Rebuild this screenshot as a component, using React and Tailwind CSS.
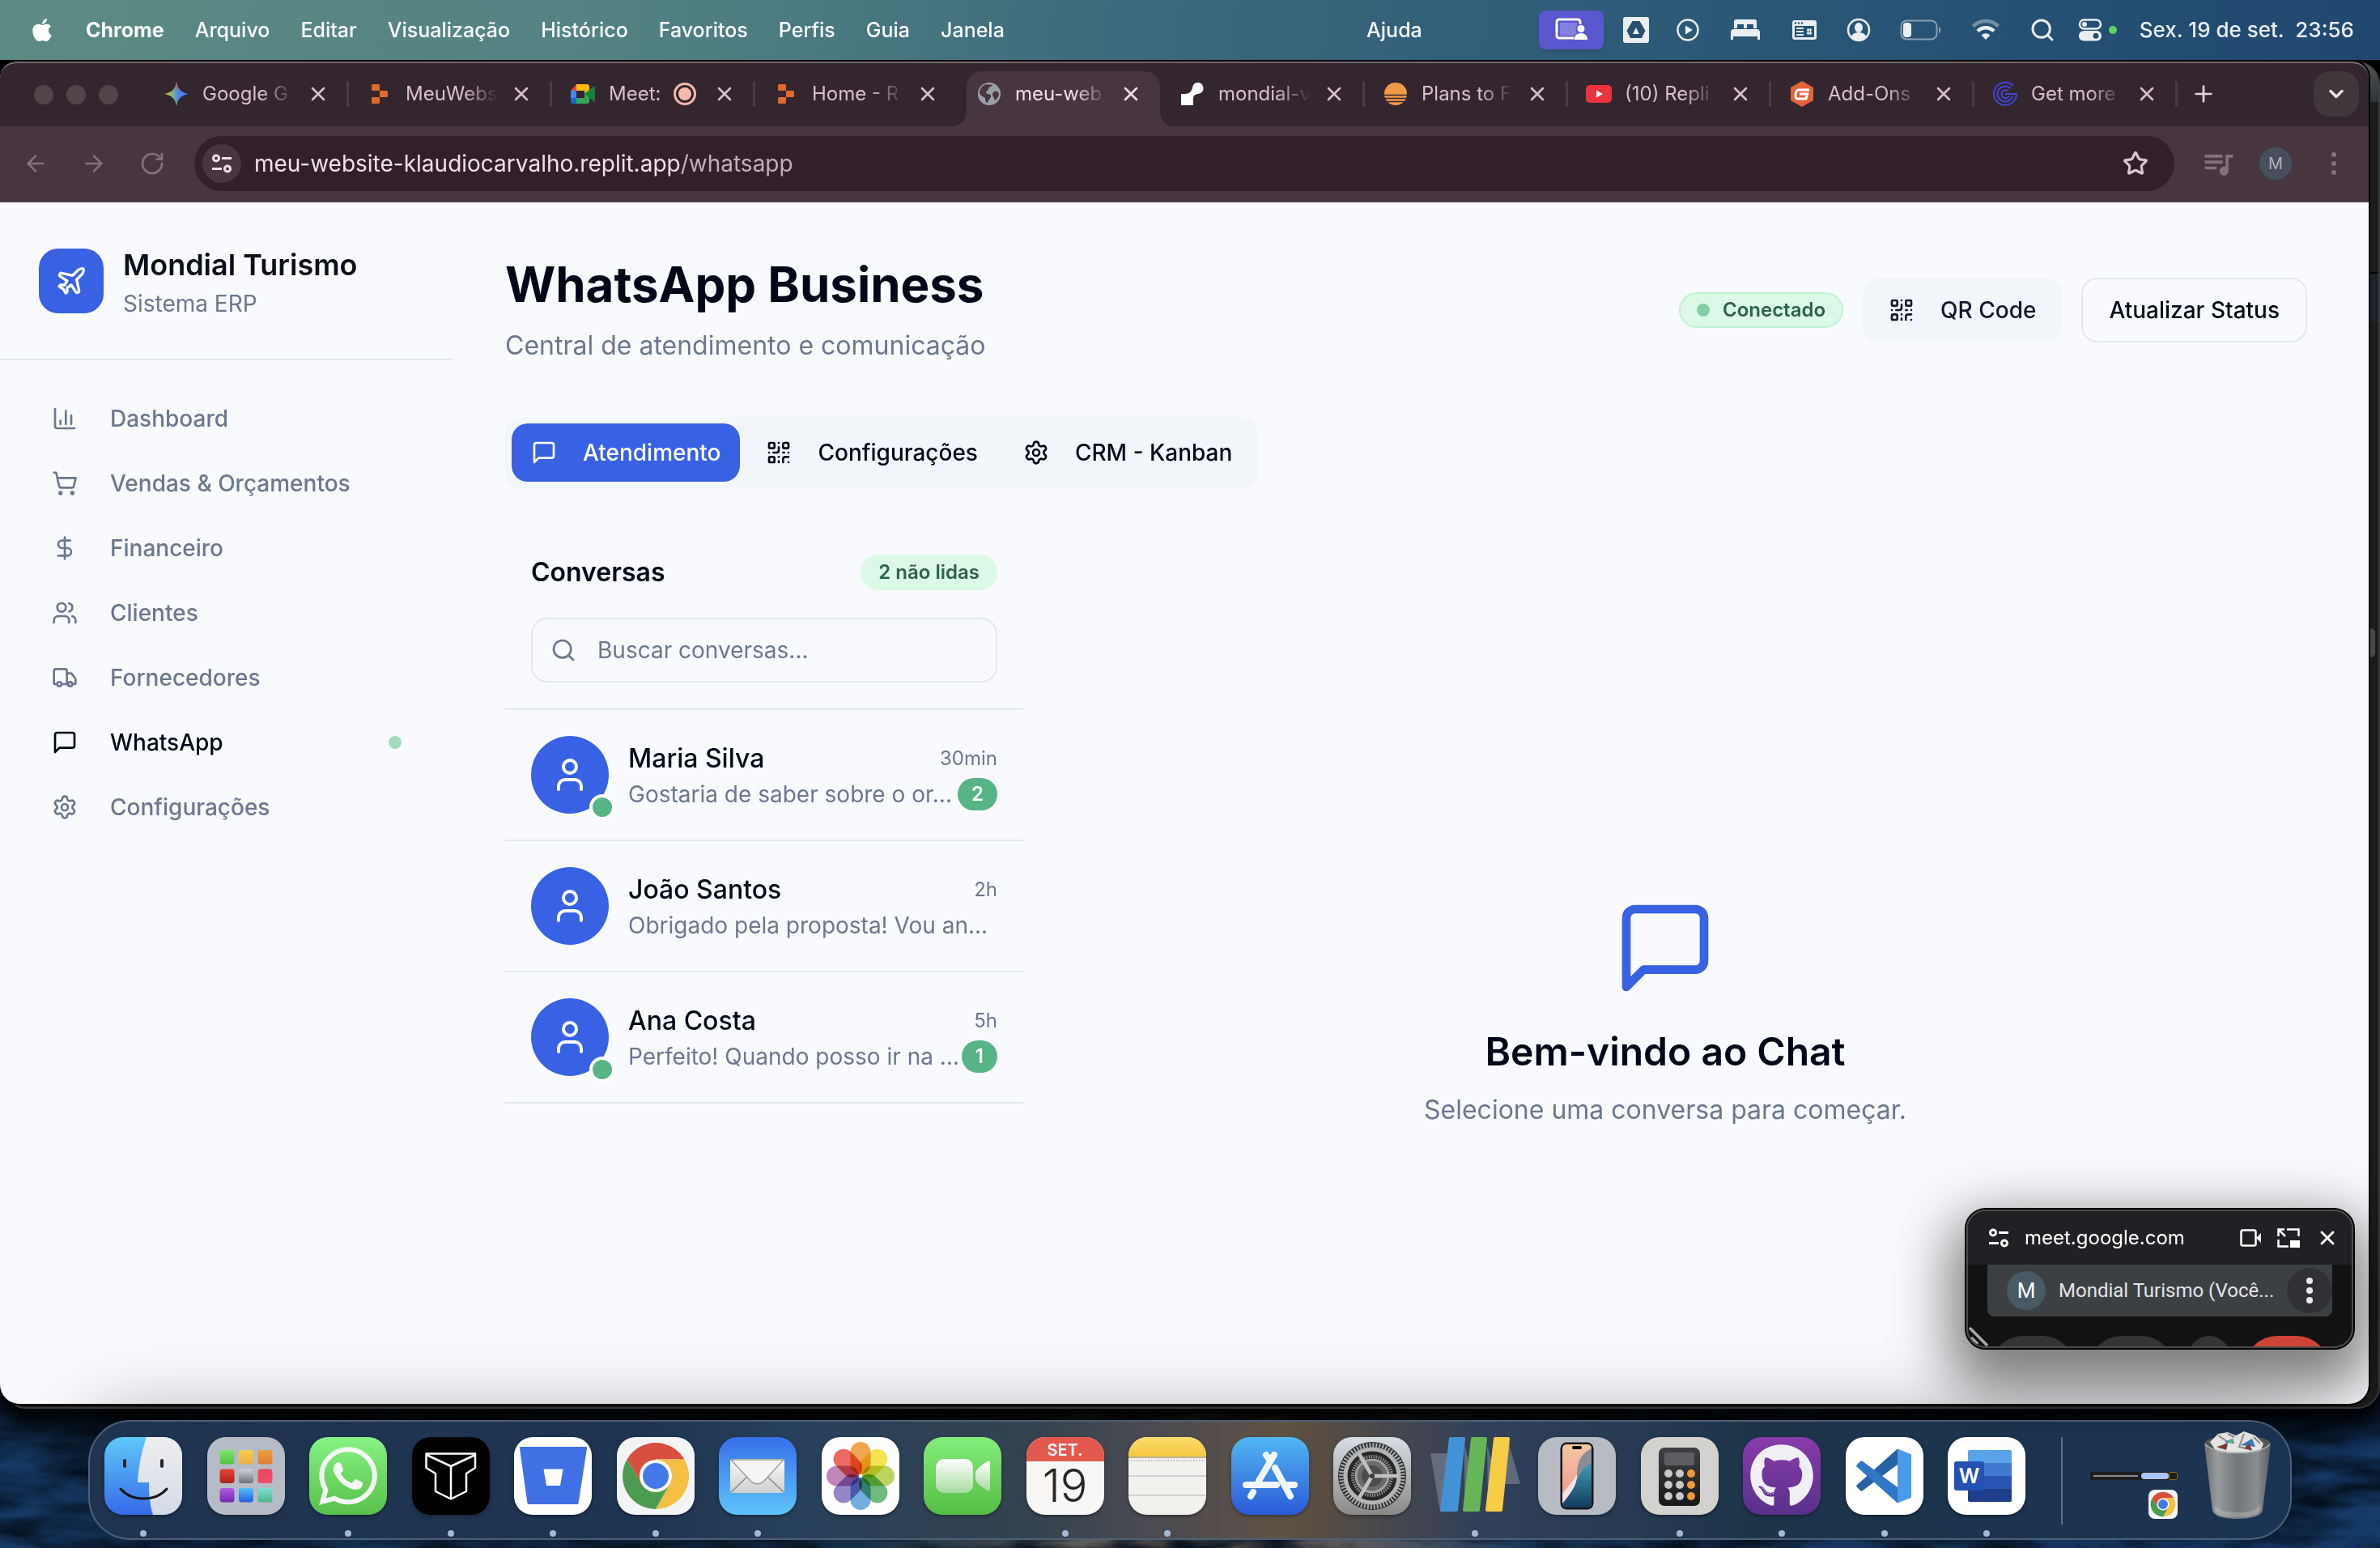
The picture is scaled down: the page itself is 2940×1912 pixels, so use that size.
import React from "react";
import {
  ArrowLeft, ArrowRight, RotateCw, Star, X, Plus, ChevronDown, Plane, ShoppingCart, DollarSign,
  Users, Truck, Settings, QrCode, Search, User,
} from "lucide-react";
import { FaApple, FaGithub, FaWhatsapp } from "react-icons/fa";
import { SiReplit } from "react-icons/si";
import { MdQueueMusic } from "react-icons/md";

/* ---------- wallpaper ---------- */

function Wallpaper() {
  return (
    <svg className="absolute inset-0 h-full w-full" preserveAspectRatio="none" viewBox="0 0 2940 1912" aria-hidden="true">
      <defs>
        <linearGradient id="sea" x1="0" y1="0" x2="1" y2="0">
          <stop offset="0" stopColor="#163a66" />
          <stop offset="0.36" stopColor="#173653" />
          <stop offset="0.48" stopColor="#857a70" />
          <stop offset="0.57" stopColor="#6d6a70" />
          <stop offset="0.64" stopColor="#204470" />
          <stop offset="1" stopColor="#163a69" />
        </linearGradient>
        <filter id="waves" x="0" y="0" width="100%" height="100%" colorInterpolationFilters="sRGB">
          <feTurbulence type="fractalNoise" baseFrequency="0.008 0.03" numOctaves="4" seed="7" />
          <feColorMatrix values="0 0 0 0 0.02  0 0 0 0 0.07  0 0 0 0 0.13  2.6 0 0 0 -0.95" />
        </filter>
      </defs>
      <rect y="1600" width="2940" height="312" fill="url(#sea)" />
      <rect y="1700" width="2940" height="212" filter="url(#waves)" />
    </svg>
  );
}

/* ---------- menu bar ---------- */

const menus = ["Arquivo", "Editar", "Visualização", "Histórico", "Favoritos", "Perfis", "Guia", "Janela"];

function MenuBar() {
  return (
    <header className="relative z-10 flex h-[74px] shrink-0 items-center bg-[linear-gradient(97deg,#5d8a83_0%,#548283_25%,#46757f_38%,#3a677b_50%,#2e5b78_68%,#255073_85%,#21476f_100%)] pr-8 pl-9 text-[25px] leading-8 font-medium text-white [text-shadow:0_2px_6px_rgba(0,0,0,0.25)]">
      <div className="flex items-center gap-[38px]">
        <button type="button" aria-label="Apple"><FaApple className="size-8" /></button>
        <button type="button" className="font-bold">Chrome</button>
        {menus.map((m) => <button type="button" key={m}>{m}</button>)}
      </div>
      <button type="button" className="mr-[144px] ml-auto">Ajuda</button>
      <div className="flex items-center text-[#e9eef0]">
        <span className="flex h-12 w-20 items-center justify-center rounded-lg bg-[#5a57cf] shadow-md">
          <svg viewBox="0 0 40 30" className="h-[30px] w-10 text-white">
            <path d="M31 8V5a3 3 0 0 0-3-3H5a3 3 0 0 0-3 3v17a3 3 0 0 0 3 3h18" fill="none" stroke="currentColor" strokeWidth="3" />
            <path d="M6 6h21v4a7 7 0 0 0 0 9l-4 3H6z" fill="currentColor" opacity="0.25" />
            <circle cx="32" cy="13.500" r="4.500" fill="currentColor" />
            <path d="M23.500 27c0-5 3.500-8 8.500-8s8 3 8 8z" fill="currentColor" />
          </svg>
        </span>
        <svg viewBox="0 0 32 32" className="ml-6 size-8">
          <rect width="32" height="32" rx="3" fill="currentColor" />
          <path d="M11.500 5h9l7 12-4.500 9H9L4.500 17z" fill="#275070" />
          <path d="M16 13l4 8h-8z" fill="currentColor" />
        </svg>
        <svg viewBox="0 0 32 32" className="ml-8 size-8">
          <circle cx="16" cy="16" r="12.500" fill="none" stroke="currentColor" strokeWidth="2.500" />
          <path d="M13 10.500l9 5.500-9 5.500z" fill="currentColor" />
        </svg>
        <svg viewBox="0 0 36 28" className="ml-[37px] h-7 w-9">
          <path d="M4 3.500A2.500 2.500 0 0 1 6.500 1h23A2.500 2.500 0 0 1 32 3.500V12H4z" fill="currentColor" />
          <path d="M8 7h8v5H8zM20 7h8v5h-8z" fill="#295474" />
          <path d="M0 17a4 4 0 0 1 4-4h28a4 4 0 0 1 4 4v9h-3v-4H3v4H0z" fill="currentColor" />
        </svg>
        <svg viewBox="0 0 32 28" className="ml-[39px] h-7 w-8">
          <rect x="1" y="2" width="30" height="24" rx="3" fill="currentColor" />
          <path d="M4 9h24v14H4z" fill="#275272" />
          <g stroke="currentColor" strokeWidth="2" fill="none">
            <path d="M6 12h9M6 16h9M6 20h9" />
            <path d="M19 14h6M19 18h6M20.500 12v8M23.500 12v8" strokeWidth="1.500" />
          </g>
          <g fill="#275272"><circle cx="5" cy="5.500" r="1.200" /><circle cx="9" cy="5.500" r="1.200" /><circle cx="13" cy="5.500" r="1.200" /></g>
        </svg>
        <svg viewBox="0 0 32 32" className="ml-[35px] size-8">
          <circle cx="16" cy="16" r="13" fill="none" stroke="currentColor" strokeWidth="2.500" />
          <ellipse cx="16" cy="13" rx="5" ry="6" fill="currentColor" />
          <path d="M6.500 25c1-4 5-6 9.500-6s8.500 2 9.500 6a13 13 0 0 1-19 0z" fill="currentColor" />
        </svg>
        <svg viewBox="0 0 52 26" className="ml-[35px] h-[26px] w-[52px]">
          <rect x="1.500" y="1.500" width="44" height="23" rx="7" fill="none" stroke="currentColor" strokeWidth="2" opacity="0.5" />
          <rect x="4" y="4" width="10" height="18" rx="4" fill="currentColor" />
          <path d="M48 9c3 1 3 7 0 8z" fill="currentColor" opacity="0.5" />
        </svg>
        <svg viewBox="0 0 36 28" className="ml-9 h-7 w-9" fill="none" stroke="currentColor" strokeWidth="4.500">
          <path d="M2.500 9.500a22 22 0 0 1 31 0" opacity="0.4" />
          <path d="M8 15.500a14 14 0 0 1 20 0" />
          <path d="M18 26l-5.500-5.500a8 8 0 0 1 11 0z" fill="currentColor" stroke="none" />
        </svg>
        <Search className="ml-9 size-8" strokeWidth={2.2} />
        <svg viewBox="0 0 30 28" className="ml-7 h-7 w-[30px]">
          <rect x="2" y="1.500" width="26" height="11" rx="5.500" fill="none" stroke="currentColor" strokeWidth="2.500" />
          <circle cx="8" cy="7" r="3" fill="currentColor" />
          <rect x="1" y="15" width="28" height="12.500" rx="6" fill="currentColor" />
          <circle cx="22" cy="21.250" r="3.500" fill="#234f73" />
        </svg>
        <span className="ml-2 size-[10px] rounded-full bg-[#5fd35c]" />
        <button type="button" className="ml-7 text-[26px] whitespace-pre">Sex. 19 de set.  23:56</button>
      </div>
    </header>
  );
}

/* ---------- favicons ---------- */

function GeminiIcon() {
  return (
    <svg viewBox="0 0 32 32" className="size-8">
      <defs>
        <linearGradient id="gem" x1="0" y1="0.5" x2="1" y2="0.5">
          <stop offset="0" stopColor="#f4c534" /><stop offset="0.35" stopColor="#7cb28c" /><stop offset="0.6" stopColor="#4a82f0" />
        </linearGradient>
        <linearGradient id="gem2" x1="0" y1="0" x2="0" y2="1">
          <stop offset="0" stopColor="#e8483c" /><stop offset="0.4" stopColor="#e8483c" stopOpacity="0" /><stop offset="0.7" stopColor="#34a853" stopOpacity="0" /><stop offset="1" stopColor="#34a853" />
        </linearGradient>
      </defs>
      {["url(#gem)", "url(#gem2)"].map((f) => (
        <path key={f} d="M16 1c1.500 9 6 13.500 15 15-9 1.500-13.500 6-15 15-1.500-9-6-13.500-15-15 9-1.500 13.500-6 15-15z" fill={f} />
      ))}
    </svg>
  );
}
function MeetIcon() {
  return (
    <svg viewBox="0 0 32 32" className="size-8">
      <path d="M1 12h7v9H1z" fill="#4285f4" /><path d="M1 12l7-8v8z" fill="#ea4335" />
      <path d="M8 4h13a3 3 0 0 1 3 3v6l-6 4v-5H8z" fill="#fbbc04" />
      <path d="M1 21h7v7H4a3 3 0 0 1-3-3z" fill="#1967d2" />
      <path d="M8 21h10v-6l6-3v13a3 3 0 0 1-3 3H8z" fill="#34a853" />
      <path d="M18 16l11-9c1-.8 2 0 2 1v16c0 1-1 1.800-2 1z" fill="#188038" />
    </svg>
  );
}
function GlobeIcon() {
  return (
    <svg viewBox="0 0 32 32" className="size-8">
      <circle cx="16" cy="16" r="14" fill="#9aa0a6" />
      <path d="M12 4c3 1 6 0 8 1-1 2-5 2-5 5 0 2-3 2-3 4 0 3 5 1 6 4s-3 4-4 9c-3-1-3-4-3-6-2-1-6-3-7-6 0-5 3-9 8-11zM22 13c3-1 5 0 6 3-1 5-3 7-6 8 1-3-1-4-2-6 0-2 0-4 2-5z" fill="#473540" />
    </svg>
  );
}
function MondialIcon() {
  return (
    <svg viewBox="0 0 32 32" className="size-8" fill="#fff">
      <path d="M2 16h5c5 0 8-3 9-8 1-4 3-6 7-6a7 7 0 0 1 3 13c-5 2-9 1-9 7v8H2z" />
    </svg>
  );
}
function SunIcon() {
  return (
    <svg viewBox="0 0 32 32" className="size-8">
      <circle cx="16" cy="16" r="14" fill="#f09a48" />
      <path d="M0 17.500h32M0 21.500h32M0 25.500h32" stroke="#33262e" strokeWidth="1.500" />
    </svg>
  );
}
function VideoIcon() {
  return (
    <svg viewBox="0 0 32 32" className="size-8">
      <rect x="0" y="5" width="32" height="22" rx="5" fill="#e9333f" /><path d="M13 11.500l8 4.500-8 4.500z" fill="#fff" />
    </svg>
  );
}
function HexIcon() {
  return (
    <svg viewBox="0 0 32 32" className="size-8">
      <path d="M16 0l14 8v16l-14 8-14-8V8z" fill="#e2623a" />
      <path d="M25 11H12c-3 0-4 3-4 8 0 2 1 3 3 3h10l1.500-6H13" fill="none" stroke="#fff" strokeWidth="3" />
    </svg>
  );
}
function GeniusIcon() {
  return (
    <svg viewBox="0 0 32 32" className="size-8" fill="none" stroke="#3f46d8" strokeWidth="2">
      <path d="M26 6A14 14 0 1 0 30 16H16" /><path d="M23 9.500A9.500 9.500 0 1 0 25 19" /><path d="M20 12.500a5 5 0 1 0 1 6" />
    </svg>
  );
}
const Replit = () => <span className="flex size-8 items-center justify-center"><SiReplit className="size-6 text-[#e0692c]" /></span>;

const tabs = [
  ["Google G", GeminiIcon], ["MeuWebs", Replit], ["Meet:", MeetIcon], ["Home - R", Replit],
  ["meu-web", GlobeIcon], ["mondial-v", MondialIcon], ["Plans to F", SunIcon],
  ["(10) Repli", VideoIcon], ["Add-Ons", HexIcon], ["Get more", GeniusIcon],
];

function Tab({ title, Icon, active, divider, recording }) {
  return (
    <div className={`relative flex h-[68px] w-[251px] shrink-0 items-center pb-3 pl-[22px] ${active ? "text-[#f1dfe9]" : "text-[#d9bfcf]"}`}>
      {active && (
        <svg viewBox="0 0 279 68" className="absolute top-0 -left-[10px] h-[68px] w-[279px]" fill="#473540" aria-hidden="true">
          <path d="M0 68c14 0 20-8 20-20V20C20 8 28 0 40 0h199c12 0 20 8 20 20v28c0 12 6 20 20 20z" />
        </svg>
      )}
      <span className="relative flex shrink-0"><Icon /></span>
      <button
        type="button"
        className={`relative ml-4 text-left text-[24px] leading-8 whitespace-nowrap ${recording ? "w-20" : "w-[120px] [mask-image:linear-gradient(90deg,#000_60%,transparent_95%)]"}`}
      >
        {title}
      </button>
      {recording && (
        <span className="flex size-7 items-center justify-center rounded-full border-[3px] border-[#f4b9ab]">
          <span className="size-4 rounded-full bg-[#f4b9ab]" />
        </span>
      )}
      <button type="button" aria-label={`Fechar ${title}`} className={`relative shrink-0 ${recording ? "ml-[21px]" : "ml-[9px]"}`}>
        <X className="size-7" strokeWidth={2.2} />
      </button>
      {divider && <span className="absolute top-3 right-0 h-8 w-[3px] rounded-full bg-[#493c43]" />}
    </div>
  );
}

function TuneIcon({ className }) {
  return (
    <svg viewBox="0 0 28 28" className={className} fill="none" stroke="currentColor" strokeWidth="3">
      <circle cx="7" cy="7.500" r="3.500" /><path d="M14 7.500h12M2 20.500h12" /><circle cx="21" cy="20.500" r="3.500" />
    </svg>
  );
}

function BrowserChrome() {
  return (
    <div className="shrink-0">
      <div className="flex h-[78px] items-start bg-[#33262e] pt-[10px] pr-3 pl-[42px]">
        <div className="mt-[17px] mr-[34px] flex shrink-0 gap-4">
          <span className="size-6 rounded-full bg-[#51444b]" />
          <span className="size-6 rounded-full bg-[#51444b]" />
          <span className="size-6 rounded-full bg-[#51444b]" />
        </div>
        {tabs.map(([title, Icon], i) => (
          <Tab key={title} title={title} Icon={Icon} active={i === 4} divider={i !== 3 && i !== 4} recording={i === 2} />
        ))}
        <button type="button" aria-label="Nova guia" className="mt-3 ml-4 text-[#e6d3de]"><Plus className="size-8" strokeWidth={2} /></button>
        <button type="button" aria-label="Pesquisar guias" className="ml-auto flex size-14 items-center justify-center rounded-[20px] bg-[#40363b] text-[#f1dfe9]">
          <ChevronDown className="size-7" strokeWidth={3} />
        </button>
      </div>
      <div className="flex h-[94px] items-center border-b-2 border-[#4f4147] bg-[#473540] pr-10 pl-7 text-[#83727c]">
        <button type="button" aria-label="Voltar"><ArrowLeft className="size-8" /></button>
        <button type="button" aria-label="Avançar" className="ml-10"><ArrowRight className="size-8" /></button>
        <button type="button" aria-label="Recarregar" className="ml-10"><RotateCw className="size-8" /></button>
        <div className="ml-9 flex h-[68px] flex-1 items-center rounded-full bg-[#311f2a] pr-8 pl-[10px]">
          <button type="button" aria-label="Informações do site" className="flex size-12 items-center justify-center rounded-full bg-[#473540] text-[#f1dfe9]">
            <TuneIcon className="size-7" />
          </button>
          <span className="ml-4 flex-1 text-[28px] leading-9 text-[#f1dfe9]">
            meu-website-klaudiocarvalho.replit.app<span className="text-[#c3b0bb]">/whatsapp</span>
          </span>
          <button type="button" aria-label="Favoritar" className="text-[#d9c5d0]"><Star className="size-8" strokeWidth={2.4} /></button>
        </div>
        <MdQueueMusic className="ml-8 size-11" />
        <span className="ml-[29px] flex size-10 items-center justify-center rounded-full bg-[#45505c] text-[20px] leading-6 text-[#b4b1b8]">M</span>
        <button type="button" aria-label="Menu" className="ml-[49px] flex flex-col gap-[5px]">
          <span className="size-[6px] rounded-full bg-current" /><span className="size-[6px] rounded-full bg-current" /><span className="size-[6px] rounded-full bg-current" />
        </button>
      </div>
    </div>
  );
}

/* ---------- app page ---------- */

function ChartIcon({ className }) {
  return (
    <svg viewBox="0 0 24 24" className={className} fill="none" stroke="currentColor" strokeWidth="2" strokeLinecap="round" strokeLinejoin="round">
      <path d="M3 3v16a2 2 0 0 0 2 2h16" /><path d="M18 17V9" /><path d="M13 17V5" /><path d="M8 17v-3" />
    </svg>
  );
}

function MessageIcon({ className }) {
  return (
    <svg viewBox="0 0 24 24" className={className} fill="none" stroke="currentColor" strokeWidth="2" strokeLinecap="round" strokeLinejoin="round">
      <path d="M21 15a2 2 0 0 1-2 2H7l-4 4V5a2 2 0 0 1 2-2h14a2 2 0 0 1 2 2z" />
    </svg>
  );
}

const nav = [
  ["Dashboard", ChartIcon], ["Vendas & Orçamentos", ShoppingCart], ["Financeiro", DollarSign], ["Clientes", Users],
  ["Fornecedores", Truck], ["WhatsApp", MessageIcon], ["Configurações", Settings],
];

function Sidebar() {
  return (
    <aside className="w-[560px] shrink-0">
      <div className="flex items-center gap-6 border-b-2 border-[#e3e8ef] p-12">
        <span className="flex size-20 items-center justify-center rounded-3xl bg-[#3862e3] text-white"><Plane className="size-10" /></span>
        <div>
          <p className="text-[36px] leading-[56px] font-semibold text-[#0c0f17]">Mondial Turismo</p>
          <p className="text-[28px] leading-10 text-[#6a788f]">Sistema ERP</p>
        </div>
      </div>
      <nav className="p-8">
        {nav.map(([label, Icon]) => {
          const on = label === "WhatsApp";
          return (
            <a key={label} href="#" className={`flex h-20 items-center gap-10 px-8 text-[28px] leading-10 font-medium ${on ? "text-[#020817]" : "text-[#6a788f]"}`}>
              <Icon className="size-8" />
              <span>{label}</span>
              {on && <span className="ml-auto size-4 rounded-full bg-[#a2dabf]" />}
            </a>
          );
        })}
      </nav>
    </aside>
  );
}

const chats = [
  { name: "Maria Silva", text: "Gostaria de saber sobre o or...", time: "30min", unread: 2, online: true },
  { name: "João Santos", text: "Obrigado pela proposta! Vou an...", time: "2h" },
  { name: "Ana Costa", text: "Perfeito! Quando posso ir na ...", time: "5h", unread: 1, online: true },
];

function ChatRow({ chat }) {
  return (
    <li className="border-b-2 border-[#e3e8ef]">
      <button type="button" className="flex w-full items-center gap-6 p-8 text-left">
        <span className="relative flex size-24 shrink-0 items-center justify-center rounded-full bg-[#3862e3] text-white">
          <User className="size-12" />
          {chat.online && <span className="absolute -right-2 -bottom-2 size-8 rounded-full border-4 border-white bg-[#56b487]" />}
        </span>
        <span className="block min-w-0 flex-1">
          <span className="flex h-12 items-center justify-between">
            <span className="text-[32px] leading-[48px] font-medium text-[#020817]">{chat.name}</span>
            <span className="text-[24px] leading-8 text-[#6a788f]">{chat.time}</span>
          </span>
          <span className="flex h-10 items-center justify-between">
            <span className="text-[28px] leading-10 whitespace-nowrap text-[#6a788f]">{chat.text}</span>
            {chat.unread && (
              <span className="flex h-10 items-center rounded-full bg-[#56b487] px-[17px] text-[24px] leading-8 font-semibold text-white">{chat.unread}</span>
            )}
          </span>
        </span>
      </button>
    </li>
  );
}

function Page() {
  return (
    <div className="flex min-h-0 flex-1 overflow-hidden bg-[#f9fafd] pt-px">
      <Sidebar />
      <main className="min-w-0 flex-1 pt-16 pr-[76px] pl-16">
        <div className="flex items-center justify-between">
          <div>
            <h1 className="text-[60px] leading-[72px] font-bold text-[#020817]">WhatsApp Business</h1>
            <p className="mt-4 text-[32px] leading-[48px] text-[#6a788f]">Central de atendimento e comunicação</p>
          </div>
          <div className="flex items-center gap-6">
            <span className="flex h-11 items-center gap-4 rounded-full border-2 border-[#bdf3d1] bg-[#dbf9e5] px-5 text-[24px] leading-8 font-semibold text-[#2c624a]">
              <span className="size-4 rounded-full bg-[#87cda8]" />Conectado
            </span>
            <button type="button" className="flex h-20 items-center gap-8 rounded-[20px] bg-[#f2f5fa] px-8 text-[28px] leading-10 font-medium text-[#10182b]">
              <QrCode className="size-8" />QR Code
            </button>
            <button type="button" className="h-20 rounded-[20px] border-2 border-[#e3e8ef] px-8 text-[28px] leading-10 font-medium text-[#020817]">Atualizar Status</button>
          </div>
        </div>

        <div role="tablist" className="mt-16 flex w-fit gap-2 rounded-[20px] bg-[#f2f5fa] p-2 text-[28px] leading-10 font-medium text-[#020817]">
          <button type="button" role="tab" aria-selected="true" className="flex h-[72px] items-center gap-8 rounded-[20px] bg-[#3862e3] px-6 text-white"><MessageIcon className="size-8" />Atendimento</button>
          <button type="button" role="tab" aria-selected="false" className="flex h-[72px] items-center gap-8 rounded-[20px] px-6"><QrCode className="size-8" />Configurações</button>
          <button type="button" role="tab" aria-selected="false" className="flex h-[72px] items-center gap-8 rounded-[20px] px-6"><Settings className="size-8" />CRM - Kanban</button>
        </div>

        <div className="mt-12 flex min-h-[1200px]">
          <section className="w-[640px] shrink-0">
            <div className="border-b-2 border-[#e3e8ef] p-8">
              <div className="flex h-12 items-center justify-between">
                <h2 className="text-[32px] leading-[48px] font-semibold text-[#020817]">Conversas</h2>
                <span className="flex h-11 items-center rounded-full bg-[#dbf9e5] px-[22px] text-[24px] leading-8 font-semibold text-[#2c624a]">2 não lidas</span>
              </div>
              <label className="mt-8 flex h-20 items-center gap-[26px] rounded-[20px] border-2 border-[#e3e8ef] px-[22px] text-[#6a788f]">
                <Search className="size-8" />
                <input type="text" aria-label="Buscar conversas" placeholder="Buscar conversas..." className="min-w-0 flex-1 bg-transparent text-[28px] leading-10 outline-none placeholder:text-[#6a788f]" />
              </label>
            </div>
            <ul>{chats.map((c) => <ChatRow key={c.name} chat={c} />)}</ul>
          </section>
          <section className="flex flex-1 flex-col items-center justify-center">
            <MessageIcon className="size-32 text-[#3862e3]" />
            <h2 className="mt-8 text-[48px] leading-[64px] font-semibold text-[#020817]">Bem-vindo ao Chat</h2>
            <p className="mt-4 text-[32px] leading-[48px] text-[#6a788f]">Selecione uma conversa para começar.</p>
          </section>
        </div>
      </main>
    </div>
  );
}

/* ---------- floating call window ---------- */

function CallWindow() {
  return (
    <div className="absolute right-[33px] bottom-[247px] flex h-[171px] w-[478px] flex-col overflow-hidden rounded-[24px] border-2 border-[#4a4b4d] bg-[#121212] outline-2 outline-black shadow-[0_30px_70px_20px_rgba(0,0,0,0.5)]">
      <div className="flex h-[66px] shrink-0 items-center bg-[#202124] pr-4 pl-6 text-white">
        <TuneIcon className="size-7" />
        <span className="ml-[18px] flex-1 text-[24px] leading-8">meet.google.com</span>
        <button type="button" aria-label="Câmera">
          <svg viewBox="0 0 28 28" className="size-7" fill="none" stroke="currentColor" strokeWidth="2.500"><rect x="2.500" y="4.500" width="18" height="19" rx="2" /><path d="M21 14l6-6v12z" fill="currentColor" stroke="none" /></svg>
        </button>
        <button type="button" aria-label="Voltar para a guia" className="ml-[19px]">
          <svg viewBox="0 0 28 28" className="size-7" fill="none" stroke="currentColor" strokeWidth="2.500"><path d="M12 3.500h14.500V12M1.500 16v8.500H14M1.500 12V3.500H9M2 4l8 8" /><path d="M16 17h12v9H16z" fill="currentColor" stroke="none" /></svg>
        </button>
        <button type="button" aria-label="Fechar chamada" className="ml-5"><X className="size-7" strokeWidth={2.4} /></button>
      </div>
      <div className="mx-6 flex h-16 shrink-0 items-center rounded-b-lg bg-[#3c4043] pl-6 font-[Roboto,sans-serif]">
        <span className="flex size-12 items-center justify-center rounded-full bg-[#485a63] text-[26px] leading-8 text-white">M</span>
        <span className="ml-4 flex-1 text-[24px] leading-8 whitespace-nowrap text-[#e3e5e8]">Mondial Turismo (Você...</span>
        <button type="button" aria-label="Mais opções" className="flex size-14 flex-col items-center justify-center gap-1 rounded-full bg-[#303134]">
          <span className="size-2 rounded-full bg-[#e8eaed]" /><span className="size-2 rounded-full bg-[#e8eaed]" /><span className="size-2 rounded-full bg-[#e8eaed]" />
        </button>
      </div>
      <div className="relative mt-6 flex justify-center gap-[18px]">
        <button type="button" aria-label="Microfone" className="h-20 w-[104px] rounded-full bg-[#333436]" />
        <button type="button" aria-label="Vídeo" className="h-20 w-[104px] rounded-full bg-[#333436]" />
        <button type="button" aria-label="Opções" className="size-[52px] rounded-full bg-[#333436]" />
        <button type="button" aria-label="Sair da chamada" className="h-20 w-[104px] rounded-full bg-[#ce4538]" />
        <svg viewBox="0 0 28 28" className="absolute -top-3 left-0 size-7" stroke="#a9a9a9" strokeWidth="3.500" strokeLinecap="round"><path d="M3 3l20 20M5 15l6 6" /></svg>
      </div>
    </div>
  );
}

/* ---------- dock ---------- */

function Tile({ children, className = "" }) {
  return <span className={`block size-24 overflow-hidden rounded-[23px] shadow-[0_2px_4px_rgba(0,0,0,0.35)] ${className}`}>{children}</span>;
}
const Art = ({ children }) => <svg viewBox="0 0 96 96" className="block size-full overflow-visible">{children}</svg>;
function Grad({ id, a, b }) {
  return <linearGradient id={id} x1="0" y1="0" x2="0" y2="1"><stop offset="0" stopColor={a} /><stop offset="1" stopColor={b} /></linearGradient>;
}

function ChromeLogo() {
  return (
    <g transform="translate(48 48)">
      <path d="M-35.500-20.500A41 41 0 0 1 35.500-20.500H0L-17.300 10z" fill="#d94f3e" />
      <path d="M35.500-20.500A41 41 0 0 1 0 41L17.300 10 0-20.500z" fill="#f4bf42" />
      <path d="M0 41A41 41 0 0 1-35.500-20.500L-17.300 10H17.300z" fill="#4b9c50" />
      <circle r="20" fill="#fff" /><circle r="16" fill="#4379e8" />
    </g>
  );
}

const Finder = () => (
  <Tile><Art>
    <defs><Grad id="fa" a="#5fc8fa" b="#356ae8" /><Grad id="fb" a="#eeeef0" b="#d3dae6" /></defs>
    <rect width="96" height="96" fill="url(#fa)" />
    <path d="M52 0C46 18 42 36 41 56h14c0 14 1 28 5 40h36V0z" fill="url(#fb)" />
    <path d="M25 29v7M71 29v7" stroke="#23262e" strokeWidth="4" strokeLinecap="round" />
    <path d="M20 64c14 16 43 16 57 0" fill="none" stroke="#16181d" strokeWidth="3" strokeLinecap="round" />
  </Art></Tile>
);
const pad = [["#7fe36a", "#52c241"], ["#f8d04d", "#efae3b"], ["#efa03a", "#e07b33"], ["#e8423a", "#b02218"], ["#cfd6dc", "#6c7074"], ["#ef4360", "#e75266"], ["#b05de0", "#7327b0"], ["#4fc0fa", "#2a5ce0"], ["#7ee0d4", "#4eb585"]];
const Launchpad = () => (
  <Tile><Art>
    <rect width="96" height="96" fill="#b6bcc6" />
    {pad.map(([a, b], i) => (
      <g key={i}><defs><Grad id={`lp${i}`} a={a} b={b} /></defs>
        <rect x={15.5 + (i % 3) * 23.5} y={16 + Math.floor(i / 3) * 23.5} width="18" height="17.500" rx="3.500" fill={`url(#lp${i})`} /></g>
    ))}
  </Art></Tile>
);
const WhatsAppTile = () => <Tile className="bg-linear-to-b from-[#87f384] to-[#58c04a] p-[7px] text-[#f4f7f4]"><FaWhatsapp className="size-full" /></Tile>;
const Tee = () => (
  <Tile><Art>
    <rect width="96" height="96" fill="#000" />
    <g fill="none" stroke="#fff" strokeWidth="2.500" strokeLinejoin="round"><path d="M17.500 20.500h60.500V38L67 45v22l-19 9.500L29 67V45L17.500 38z" /><path d="M18 22l30 14 30-14M48 36v40" /></g>
  </Art></Tile>
);
const Bitbucket = () => (
  <Tile><Art>
    <rect width="96" height="96" fill="#fff" />
    <path d="M8 12h81a1.500 1.500 0 0 1 1 2L79.500 82a1.500 1.500 0 0 1-1.500 1H18a1.500 1.500 0 0 1-1.500-1L7 14a1.500 1.500 0 0 1 1-2z" fill="#416fe4" />
    <path d="M36.500 39.500h24L57 60H40z" fill="#fff" />
  </Art></Tile>
);
const ChromeTile = () => <Tile><Art><rect width="96" height="96" fill="#f3f4f6" /><ChromeLogo /></Art></Tile>;
const Mail = () => (
  <Tile><Art>
    <defs><Grad id="ml" a="#3670ea" b="#5fc4fb" /><Grad id="me" a="#fafafa" b="#cfcfcf" /></defs>
    <rect width="96" height="96" fill="url(#ml)" />
    <rect x="14" y="27" width="67" height="42" rx="3" fill="url(#me)" />
    <path d="M15 68l20-19M80 68L60 49" stroke="#8b8b8b" strokeWidth="1.500" />
    <path d="M15 28l24 26c5 5 12 5 17 0l24-26z" fill="#f5f5f5" stroke="#9a9a9a" strokeWidth="1.300" />
  </Art></Tile>
);
const petals = ["#f09a38", "#f3e03c", "#b4d048", "#5bb36b", "#5fa2dc", "#8a76c0", "#b878b0", "#ea5648"];
const Photos = () => (
  <Tile><Art>
    <rect width="96" height="96" fill="#fefefe" />
    {petals.map((c, i) => <rect key={c} x="35.500" y="6" width="25" height="40" rx="12.500" fill={c} opacity="0.88" transform={`rotate(${i * 45} 48 48)`} className="mix-blend-multiply" />)}
    <circle cx="48" cy="48" r="2" fill="#fff" />
  </Art></Tile>
);
const FaceTime = () => (
  <Tile><Art>
    <defs><Grad id="ft" a="#84ee7c" b="#56bd45" /><Grad id="fw" a="#fff" b="#a8dba0" /></defs>
    <rect width="96" height="96" fill="url(#ft)" />
    <rect x="15" y="27" width="46" height="42" rx="10" fill="url(#fw)" />
    <path d="M64 45c0-6 10-12 15-15 2-1 3 0 3 2v32c0 2-1 3-3 2-5-3-15-9-15-15z" fill="url(#fw)" />
  </Art></Tile>
);
const CalendarTile = () => (
  <Tile className="flex flex-col bg-[#f8f7f5] text-center">
    <span className="block h-[30px] bg-[#e2594e] text-[20px] leading-8 font-semibold text-white">SET.</span>
    <span className="block text-[56px] leading-[60px] font-light text-[#262626]">19</span>
  </Tile>
);
const Notes = () => (
  <Tile><Art>
    <defs><Grad id="nt" a="#fbdc6c" b="#f5c63e" /></defs>
    <rect width="96" height="96" fill="#f1f1ee" /><rect width="96" height="24" fill="url(#nt)" />
    <path d="M0 25h96" stroke="#a89c74" strokeWidth="1.500" /><path d="M3 29h92" stroke="#b9b9b9" strokeWidth="2" strokeDasharray="1.500 2" />
    <path d="M0 48h96M0 72h96" stroke="#d2d2d4" strokeWidth="2" />
  </Art></Tile>
);
const AppStore = () => (
  <Tile><Art>
    <defs><Grad id="as" a="#52b6f2" b="#2a5ad8" /></defs>
    <rect width="96" height="96" fill="url(#as)" />
    <g stroke="#f2f6fb" strokeWidth="8" strokeLinecap="round"><path d="M53 22L34 54M27 68l-3 5" /><path d="M43 22l4 6M54 38l19 35" /><path d="M18 59h38M69 59h9" /></g>
  </Art></Tile>
);
const Gear = () => (
  <Tile><Art>
    <defs><Grad id="gr" a="#d7dfe4" b="#8b8986" /></defs>
    <rect width="96" height="96" fill="url(#gr)" />
    <circle cx="48" cy="48" r="42" fill="#26282a" />
    <circle cx="48" cy="48" r="38" fill="none" stroke="#a5a7a8" strokeWidth="6" strokeDasharray="2.200 1.780" />
    <circle cx="48" cy="48" r="33" fill="none" stroke="#b3b5b6" strokeWidth="5" />
    <circle cx="48" cy="48" r="24" fill="none" stroke="#8f9192" strokeWidth="4" strokeDasharray="1.500 1.500" />
    <circle cx="48" cy="48" r="20" fill="#6a6b6c" stroke="#a0a2a3" strokeWidth="3" />
    <circle cx="48" cy="48" r="13" fill="#4c4d4e" />
    <path d="M48 48h32M48 48L32 21M48 48L32 75" stroke="#bfc1c2" strokeWidth="4.500" />
    <circle cx="48" cy="48" r="3" fill="#3b3c3d" />
  </Art></Tile>
);
const Stripes = () => (
  <span className="block size-24"><Art>
    <path d="M-7 20h20L18 92H5zM35 10l8 30-8 52zM63 10l9 30-8 40zM90 8l14 50H84z" fill="#8d96a2" opacity="0.5" />
    <path d="M18 0h16a2 2 0 0 1 2 2l-9 88a2 2 0 0 1-2 2H7a2 2 0 0 1-2-2l11-88a2 2 0 0 1 2-2z" fill="#4293d6" />
    <path d="M45 0h16a2 2 0 0 1 2 2l-9 88a2 2 0 0 1-2 2H35a2 2 0 0 1-2-2L43 2a2 2 0 0 1 2-2z" fill="#66b556" />
    <path d="M73 0h16a2 2 0 0 1 2 2l-9 88a2 2 0 0 1-2 2H63a2 2 0 0 1-2-2L71 2a2 2 0 0 1 2-2z" fill="#f7cd46" />
  </Art></span>
);
const Phone = () => (
  <Tile><Art>
    <defs><Grad id="ph" a="#f2c9a4" b="#ef8f8c" /><Grad id="pb" a="#3f9fb5" b="#12395c" /><clipPath id="pc"><rect x="30" y="9" width="36" height="78" rx="5" /></clipPath></defs>
    <rect width="96" height="96" fill="#b7bbc3" />
    <rect x="27.500" y="6.500" width="41" height="83" rx="8" fill="#15161a" />
    <g clipPath="url(#pc)"><rect x="30" y="9" width="36" height="78" fill="url(#ph)" /><path d="M66 14C50 22 48 34 48 50l18-14z" fill="#8c8d95" /><path d="M66 32C44 44 50 62 30 82v6h36z" fill="url(#pb)" /><path d="M48 46c0 16-8 22-18 36V70c6-8 12-14 18-24z" fill="#f2e4e2" /></g>
    <rect x="42" y="11" width="12" height="4" rx="2" fill="#000" />
  </Art></Tile>
);
const Calculator = () => (
  <Tile><Art>
    <defs><Grad id="ca" a="#3f4144" b="#18191a" /></defs>
    <rect width="96" height="96" fill="#d3d2cf" />
    <rect x="22" y="13" width="51" height="72" rx="7" fill="url(#ca)" />
    <rect x="29" y="19" width="37" height="16" rx="3" fill="#5b5d60" />
    {[34, 48, 62].map((x, c) => [45, 59, 73].map((y) => <circle key={`${x}${y}`} cx={x} cy={y} r="5" fill={c === 2 ? "#f09a37" : "#c9c9c9"} />))}
  </Art></Tile>
);
const GitHub = () => <Tile className="bg-linear-to-b from-[#8a3bab] to-[#58308a] p-2 text-[#f1eff6]"><FaGithub className="size-full" /></Tile>;
const Code = () => (
  <Tile><Art>
    <rect width="96" height="96" fill="#fff" />
    <path d="M64 14.500L14 59c-1 1-1 2 0 3l4 4c1 1 2 1 3 0l43-32z" fill="#2763a4" />
    <path d="M64 81.500L14 37c-1-1-1-2 0-3l4-4c1-1 2-1 3 0l43 32z" fill="#3277c6" />
    <path d="M64 14.500l15 6c1 .5 2 1 2 2v51c0 1-1 1.500-2 2l-15 6z" fill="#4a9bea" />
  </Art></Tile>
);
const Word = () => (
  <Tile><Art>
    <rect width="96" height="96" fill="#fff" />
    <path d="M27 16h50a2 2 0 0 1 2 2v14H25V18a2 2 0 0 1 2-2z" fill="#5ba3e8" /><path d="M25 32h54v16H25z" fill="#4079cf" />
    <path d="M25 48h54v16H25z" fill="#2956b5" /><path d="M25 64h54v14a2 2 0 0 1-2 2H27a2 2 0 0 1-2-2z" fill="#1e3d8b" />
    <rect x="8" y="30" width="37" height="36" rx="3" fill="#2452b0" />
    <text x="26.500" y="57" textAnchor="middle" fontSize="25" fontWeight="600" fill="#fff">W</text>
  </Art></Tile>
);
const Trash = () => (
  <svg viewBox="0 0 84 110" className="h-[110px] w-[84px]">
    <defs><linearGradient id="tr" x1="0" x2="1"><stop offset="0" stopColor="#6f7375" /><stop offset="0.2" stopColor="#9da0a1" /><stop offset="0.5" stopColor="#77797a" /><stop offset="0.8" stopColor="#8e9192" /><stop offset="1" stopColor="#5c5f61" /></linearGradient></defs>
    <ellipse cx="42" cy="16" rx="41" ry="10" fill="#55585a" />
    <path d="M8 14l10-10 12-2 10 4 10-5 14 5 10 10-4 10-28 4-26-4z" fill="#e6e6e4" />
    <path d="M18 6l12 8-10 8M50 4l-6 16 16 4M62 8l8 8M30 4l8 4" fill="none" stroke="#8a8a88" strokeWidth="2" />
    <path d="M26 14l10-4 2 6zM46 18l14-8 4 10z" fill="#3a78b8" /><path d="M16 20l14-4-2 8zM50 22l6-6 4 8z" fill="#7b3b30" /><path d="M30 13l8-2-4 5z" fill="#5ac86a" />
    <path d="M1 16c6 9 24 12 41 12s35-3 41-12L73 98c-1 7-14 11-31 11S12 105 11 98z" fill="url(#tr)" opacity="0.96" />
    <path d="M2 17c8 8 24 10 40 10s33-2 40-10" fill="none" stroke="#b4b6b7" strokeWidth="1.500" />
    <path d="M13 92c6 7 18 9 29 9s23-2 29-9l-1 6c-3 6-14 9-28 9s-25-3-28-9z" fill="#c3c5c6" opacity="0.4" />
  </svg>
);

const apps = [
  ["Finder", Finder, 1], ["Launchpad", Launchpad, 0], ["WhatsApp", WhatsAppTile, 1], ["Trae", Tee, 1], ["Bitbucket", Bitbucket, 1],
  ["Chrome", ChromeTile, 1], ["Mail", Mail, 1], ["Fotos", Photos, 0], ["FaceTime", FaceTime, 0], ["Calendário", CalendarTile, 1],
  ["Notas", Notes, 1], ["App Store", AppStore, 0], ["Ajustes", Gear, 0], ["Barras", Stripes, 1], ["iPhone", Phone, 0],
  ["Calculadora", Calculator, 1], ["GitHub", GitHub, 1], ["VS Code", Code, 1], ["Word", Word, 1],
];

function Dock() {
  return (
    <footer className="relative mx-[109px] mt-5 mb-[10px] flex h-[148px] shrink-0 items-start rounded-[52px] border-2 border-[#4c6076] bg-[linear-gradient(90deg,#1f3450_0%,#1e3450_25%,#27405b_32%,#35434f_43%,#4a4a52_48%,#5e5244_54%,#574d42_56%,#31415a_63%,#1d3449_76%,#1c3454_100%)] pt-[19px] pr-[19px] pl-[18px] shadow-[0_0_90px_10px_rgba(0,0,0,0.28)]">
      <div className="flex flex-1 justify-between">
        {apps.map(([label, Icon, running]) => (
          <button type="button" key={label} aria-label={label} className="flex w-24 flex-col items-center">
            <Icon />
            {running === 1 && <span className="mt-[19px] size-2 rounded-full bg-[#a5b8d4]" />}
          </button>
        ))}
      </div>
      <span className="ml-11 h-[108px] w-[2px] bg-[#5d7189]" />
      <button type="button" aria-label="Janela minimizada" className="mt-[43px] ml-[34px] flex w-[108px] flex-col items-end">
        <span className="flex h-[10px] w-full items-center overflow-hidden bg-[#1d1e20]">
          <span className="mx-1 h-[2px] flex-1 bg-[#8b8d90]" />
          <span className="h-2 w-[34px] rounded-full bg-[#a9c4f5]" />
          <span className="h-[10px] w-[11px] rounded-xs border border-[#8a6a1c]" />
        </span>
        <span className="mt-3 block size-9 overflow-hidden rounded-lg bg-[#f3f4f6]"><Art><ChromeLogo /></Art></span>
      </button>
      <button type="button" aria-label="Lixo" className="-mt-2 mr-1 ml-8"><Trash /></button>
    </footer>
  );
}

export default function App() {
  return (
    <div className="relative flex h-screen w-full flex-col overflow-hidden bg-black font-[Inter,sans-serif]">
      <Wallpaper />
      <MenuBar />
      {/* window behind the browser, visible at the right edge and below */}
      <div className="absolute top-[76px] right-0 bottom-[172px] left-1 rounded-[28px] border-2 border-[#3c3e40] bg-[#1c1c1d] shadow-[0_10px_36px_20px_#000]">
        <div className="absolute top-0 right-0 h-[48px] w-6 rounded-tr-[26px] bg-linear-to-b from-[#505356] to-[#303336]" />
        <div className="absolute top-[258px] right-0 h-[62px] w-3 border-t-2 border-black bg-[#1c242b]" />
        <div className="absolute top-[698px] right-1 h-9 w-3 rounded-full bg-[#48494a]" />
      </div>
      <div className="relative mt-[2px] mr-[14px] flex min-h-0 flex-1 flex-col overflow-hidden rounded-t-[20px] rounded-b-[24px] border-t-2 border-[#75676f] bg-[#f9fafd] outline-2 outline-black">
        <BrowserChrome />
        <Page />
      </div>
      <Dock />
      <CallWindow />
    </div>
  );
}
